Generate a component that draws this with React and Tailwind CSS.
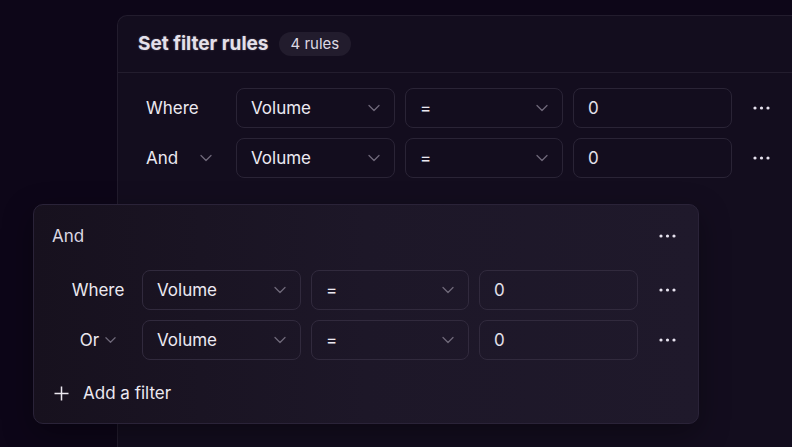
import React from "react";

const Chevron = ({ className = "" }) => (
  <svg width="12" height="8" viewBox="0 0 12 8" fill="none" className={`shrink-0 ${className}`}>
    <path d="M1 1.5L6 6.5L11 1.5" stroke="currentColor" strokeWidth="1.3" strokeLinecap="round" strokeLinejoin="round" />
  </svg>
);

const DotsIcon = () => (
  <svg width="17" height="4" viewBox="0 0 17 4" fill="currentColor">
    <circle cx="2" cy="2" r="1.6" />
    <circle cx="8.5" cy="2" r="1.6" />
    <circle cx="15" cy="2" r="1.6" />
  </svg>
);

const Dots = () => (
  <button className="w-8 h-8 shrink-0 flex items-center justify-center text-[#e6e2ee] ml-[3px]">
    <DotsIcon />
  </button>
);

const Select = ({ value, width, border }) => (
  <div
    className={`h-10 shrink-0 ${width} ${border} border rounded-[8px] flex items-center justify-between pl-[14px] pr-[14px] pt-[2px] text-[17px] text-[#ece9f2]`}
  >
    <span>{value}</span>
    <Chevron className="text-[#6e6879] -mt-[2px]" />
  </div>
);

const Input = ({ value, border }) => (
  <div className={`h-10 w-[159px] shrink-0 ${border} border rounded-[8px] flex items-center pl-[14px] pt-[2px] text-[17px] text-[#e3e0ea]`}>
    {value}
  </div>
);

const Row = ({ label, withChevron, border, compact }) => (
  <div className="flex items-center gap-[10px]">
    {compact ? (
      <div className="w-[80px] shrink-0 pl-[12px] pt-[2px] flex items-center justify-center gap-[6px] text-[17px] text-[#ebe8f0]">
        <span>{label}</span>
        {withChevron && <Chevron className="text-[#6e6879] w-[11px] -mt-[2px]" />}
      </div>
    ) : (
      <div className="w-[88px] shrink-0 pl-2 pr-[14px] pt-[2px] flex items-center justify-between text-[17px] text-[#ebe8f0]">
        <span>{label}</span>
        {withChevron && <Chevron className="text-[#6e6879] -mt-[2px]" />}
      </div>
    )}
    <Select value="Volume" width="w-[159px]" border={border} />
    <Select value="=" width="w-[158px]" border={border} />
    <Input value="0" border={border} />
    <Dots />
  </div>
);

export default function App() {
  return (
    <div
      className="relative w-[792px] h-[447px] overflow-hidden bg-[#0d0618] pl-[117px] pt-[15px]"
      style={{ fontFamily: "Inter, 'Noto Sans', sans-serif" }}
    >
      {/* main panel */}
      <div className="w-[720px] h-[460px] bg-[#130d1e] border-l border-t border-[#221c2d] rounded-tl-[10px]">
        <div className="h-[57px] px-[20px] flex items-center gap-[10px] border-b border-[#231d2e]">
          <h2 className="text-[19px] font-bold text-[#e4e0ea] [text-shadow:0_0_2px_rgba(228,224,234,0.35)]">
            Set filter rules
          </h2>
          <span className="h-6 px-3 rounded-full bg-[#221c2d] text-[15px] text-[#ddd9e3] flex items-center">
            4 rules
          </span>
        </div>
        <div className="pt-[15px] px-[20px] flex flex-col gap-[10px]">
          <Row label="Where" border="border-[#2a2436]" />
          <Row label="And" withChevron border="border-[#2a2436]" />
        </div>
      </div>

      {/* nested group card */}
      <div className="absolute left-[33px] top-[204px] w-[666px] h-[220px] rounded-[10px] border border-[#2a2338] bg-gradient-to-r from-[#17111e] via-[#1d1728] to-[#1f192b] shadow-[0_10px_30px_rgba(0,0,0,0.35)] px-[18px] pt-[19px]">
        <div className="h-6 flex items-center justify-between">
          <span className="text-[17px] text-[#dcd8e3] pt-[2px]">And</span>
          <div className="mr-[4px] text-[#e6e2ee]">
            <DotsIcon />
          </div>
        </div>
        <div className="mt-[22px] flex flex-col gap-[10px]">
          <Row label="Where" compact border="border-[#312a3d]" />
          <Row label="Or" withChevron compact border="border-[#312a3d]" />
        </div>
        <button className="mt-[21px] h-6 flex items-center gap-[14px] pl-[2px] text-[17px] text-[#ebe8f0]">
          <svg width="15" height="15" viewBox="0 0 15 15" fill="none" stroke="currentColor" strokeWidth="1.5">
            <path d="M7.5 0.5V14.5M0.5 7.5H14.5" />
          </svg>
          <span className="pt-[2px]">Add a filter</span>
        </button>
      </div>
    </div>
  );
}
